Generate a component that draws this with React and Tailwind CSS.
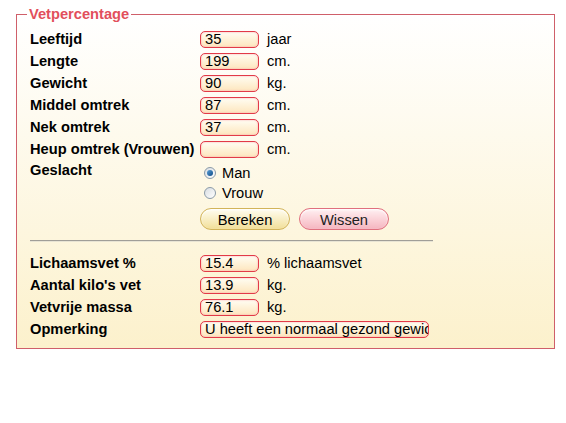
import React from "react";

const font = { fontFamily: '"Liberation Sans", Arial, sans-serif' };

function Field({ value, w = "w-[59px]" }) {
  return (
    <input
      readOnly
      defaultValue={value}
      className={`${w} h-[17px] rounded-[5px] border border-[#e23a48] bg-gradient-to-b from-[#fffdf3] to-[#fde6bd] pl-[4px] text-[14.67px] leading-[15px] text-black shadow-[inset_0_0_2px_#f7a0a8] outline-none`}
      style={font}
    />
  );
}

function Row({ label, value, unit, w }) {
  return (
    <div className="flex h-[22px] items-center">
      <div className="w-[170px] font-bold">{label}</div>
      <Field value={value} w={w} />
      {unit ? <span className="ml-[8px]">{unit}</span> : null}
    </div>
  );
}

function Radio({ checked, label }) {
  return (
    <div className="flex h-[20px] items-center">
      <span className="ml-[4px] flex h-[12px] w-[12px] items-center justify-center rounded-full border border-[#8a9aa8] bg-gradient-to-br from-[#d8dde2] to-[#ffffff]">
        {checked ? (
          <span className="h-[6px] w-[6px] rounded-full bg-gradient-to-br from-[#5aa0d8] to-[#0a4a86]" />
        ) : null}
      </span>
      <span className="ml-[6px]">{label}</span>
    </div>
  );
}

export default function App() {
  return (
    <div className="min-h-[423px] bg-white pl-[16px] pr-[11px] pt-[6px] text-[14.67px] text-black" style={font}>
      <fieldset className="border border-[#cf5f6a] bg-gradient-to-b from-white to-[#fcf1cc] pb-[8px] pl-[13px] pr-[13px] pt-[5px]">
        <legend className="ml-[-3px] px-[2px] text-[14.67px] font-bold leading-[17px] text-[#e24f5c]">
          Vetpercentage
        </legend>
        <Row label="Leeftijd" value="35" unit="jaar" />
        <Row label="Lengte" value="199" unit="cm." />
        <Row label="Gewicht" value="90" unit="kg." />
        <Row label="Middel omtrek" value="87" unit="cm." />
        <Row label="Nek omtrek" value="37" unit="cm." />
        <Row label="Heup omtrek (Vrouwen)" value="" unit="cm." />
        <div className="flex">
          <div className="flex h-[20px] w-[170px] items-center font-bold">Geslacht</div>
          <div className="flex flex-col pt-[3px]">
            <Radio checked label="Man" />
            <Radio label="Vrouw" />
          </div>
        </div>
        <div className="ml-[170px] mt-[5px] flex gap-[9px]">
          <button className="h-[22px] w-[90px] rounded-full border border-[#d2b45a] bg-gradient-to-b from-[#fffdf0] to-[#f2df98] text-[14.67px] text-black shadow-[inset_0_1px_2px_#ffffff]" style={font}>
            Bereken
          </button>
          <button className="h-[22px] w-[90px] rounded-full border border-[#e0707e] bg-gradient-to-b from-[#fff0f2] to-[#f5b6c0] text-[14.67px] text-[#222] shadow-[inset_0_1px_2px_#ffffff]" style={font}>
            Wissen
          </button>
        </div>
        <div className="mt-[10px] h-[2px] w-[403px] border-b border-t border-b-[#e8e4d4] border-t-[#a09e98]" />
        <div className="mt-[10px]">
          <Row label="Lichaamsvet %" value="15.4" unit="% lichaamsvet" />
          <Row label="Aantal kilo's vet" value="13.9" unit="kg." />
          <Row label="Vetvrije massa" value="76.1" unit="kg." />
          <Row label="Opmerking" value="U heeft een normaal gezond gewicht" w="w-[229px]" />
        </div>
      </fieldset>
    </div>
  );
}
